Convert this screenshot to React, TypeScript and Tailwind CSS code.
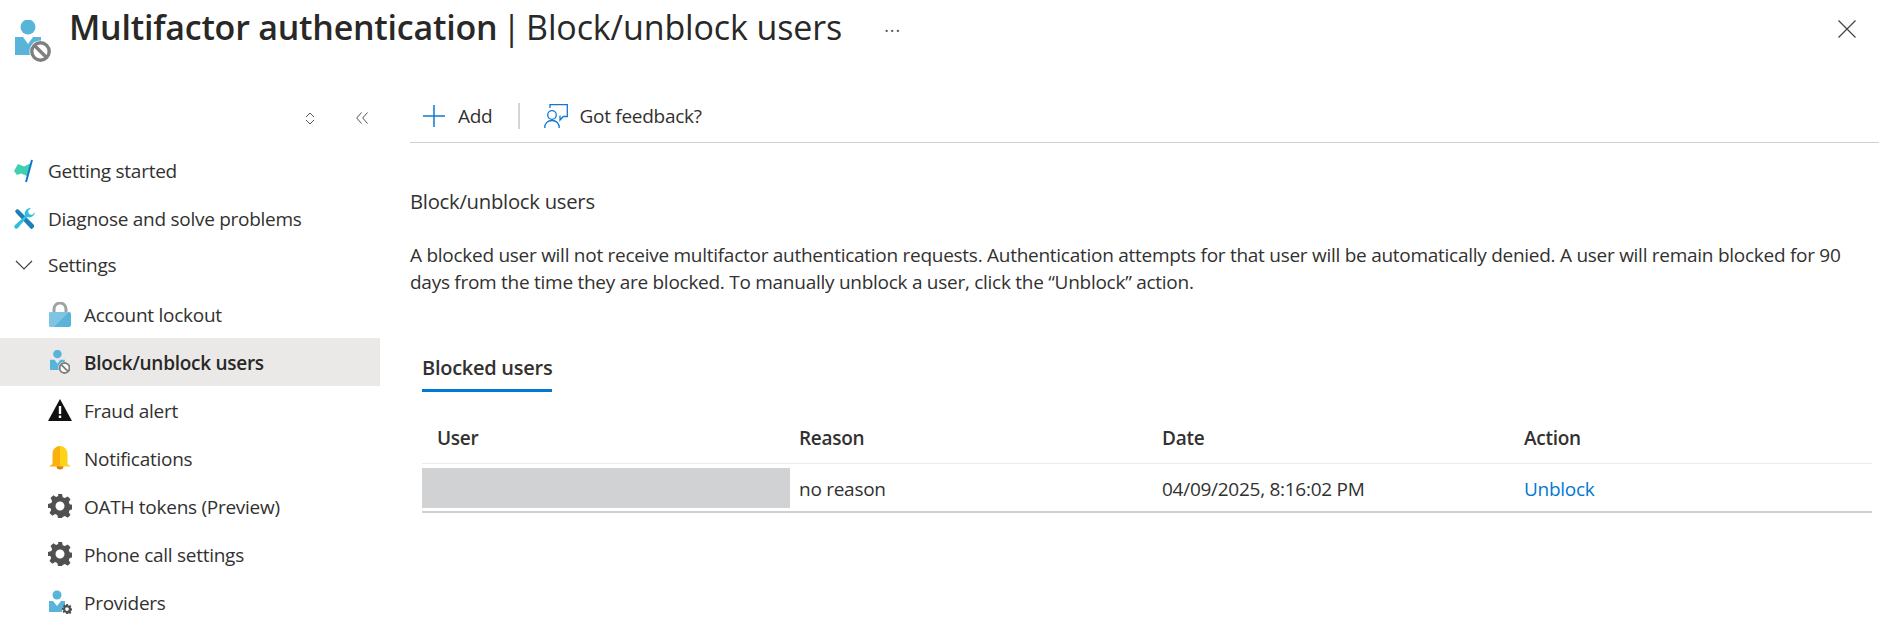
const fontStack = "font-['Open_Sans','Noto_Sans',sans-serif]";
const bodyText = "text-[19px] tracking-[-0.27px]";

function PersonBlockIcon({ height }: { height: number }) {
  return (
    <svg width={(height * 36) / 42} height={height} viewBox="0 0 36 42" className="shrink-0">
      <circle cx="13" cy="7" r="7.500" fill="#59b4d9" />
      <path d="M0 17h8l5 7 5-7h8v18H0z" fill="#59b4d9" />
      <circle cx="25.500" cy="31.500" r="11" fill="#fff" />
      <circle cx="25.500" cy="31.500" r="8.700" fill="#fff" stroke="#7f7f7f" strokeWidth="3.400" />
      <path d="M19.500 25.500l12 12" stroke="#7f7f7f" strokeWidth="3.400" />
    </svg>
  );
}

function GearIcon({ small }: { small?: boolean }) {
  const s = small ? 10 : 24;
  return (
    <svg width={s} height={s} viewBox="0 0 24 24" fill="#505050" className="shrink-0">
      <path
        fillRule="evenodd"
        d="M10 0h4l.7 3.200 2.200.9 2.800-1.700 2.800 2.800-1.700 2.800.9 2.200 3.300.8v4.200l-3.300.8-.9 2.200 1.700 2.800-2.800 2.800-2.800-1.700-2.200.9L14 24h-4l-.7-3.100-2.200-.9-2.800 1.700-2.800-2.800 1.700-2.800-.9-2.200L0 14.100V9.900l3.300-.8.900-2.200-1.700-2.800 2.800-2.800 2.800 1.700 2.200-.9zM12 7.500a4.500 4.500 0 1 0 0 9 4.500 4.500 0 0 0 0-9z"
      />
    </svg>
  );
}

function NavRow({
  icon,
  label,
  active,
  nested,
  h = "h-12",
}: {
  icon: React.ReactNode;
  label: string;
  active?: boolean;
  nested?: boolean;
  h?: string;
}) {
  return (
    <div
      className={`flex items-center ${h} ${nested ? "pl-[48px]" : "pl-[12px]"} ${
        active ? "bg-[#ebe9e7] font-semibold text-[#292827]" : "text-[#323130]"
      }`}
    >
      <span className="flex w-[24px] justify-center">{icon}</span>
      <span className={`ml-[12px] whitespace-nowrap ${nested ? "mt-[2px]" : ""} ${bodyText}`}>{label}</span>
    </div>
  );
}

function Sidebar() {
  return (
    <div className="w-[380px] shrink-0">
      <div className="mt-[18px] flex h-[28px] items-center justify-end gap-[41px] pr-[12px]">
        <svg width="10" height="13" viewBox="0 0 10 13" fill="none" stroke="#555" strokeWidth="1">
          <path d="M1 5l4-4 4 4M1 8l4 4 4-4" />
        </svg>
        <svg width="12" height="12" viewBox="0 0 12 12" fill="none" stroke="#555" strokeWidth="1">
          <path d="M5.500.5L.7 6l4.800 5.500M11.500.5L6.700 6l4.800 5.500" />
        </svg>
      </div>
      <div className="mt-[15px]">
        <NavRow
          label="Getting started"
          icon={
            <svg width="20" height="24" viewBox="0 0 20 24">
              <path d="M0 12l4-7 6 2.500L17 4l-4 13-6-2.500-4 1.500z" fill="#3fd0b0" />
              <path d="M18 1L12 23" stroke="#0f78d4" strokeWidth="2" />
            </svg>
          }
        />
        <NavRow
          label="Diagnose and solve problems"
          icon={
            <svg width="21" height="22" viewBox="0 0 21 22">
              <path d="M1 3l2-2 2 1 15 15v2l-2 2h-1L2 5z" fill="#1e7fb8" />
              <path d="M21 4a6 6 0 0 1-8 5L4 20l-2 1-2-2 1-2L11 8a6 6 0 0 1 6-8l-3 3 1 3 3 1z" fill="#32bedd" />
            </svg>
          }
        />
        <NavRow
          h="h-[44px]"
          label="Settings"
          icon={
            <svg width="18" height="10" viewBox="0 0 18 10" fill="none" stroke="#444" strokeWidth="1.200">
              <path d="M1 1l8 8 8-8" />
            </svg>
          }
        />
        <NavRow
          nested
          h="h-[51px] pt-[4px]"
          label="Account lockout"
          icon={
            <svg width="22" height="25" viewBox="0 0 22 25">
              <path d="M5 12V7a6 6 0 0 1 12 0v5" fill="none" stroke="#a0a1a2" strokeWidth="3" />
              <rect y="10" width="22" height="15" rx="2" fill="#59b4d9" />
              <path d="M0 24V12a2 2 0 0 1 2-2h18L5 25H2z" fill="#7fc4e2" />
            </svg>
          }
        />
        <NavRow nested active label="Block/unblock users" icon={<PersonBlockIcon height={24} />} />
        <NavRow
          nested
          label="Fraud alert"
          icon={
            <svg width="24" height="22" viewBox="0 0 24 22">
              <path d="M12 0l12 22H0z" fill="#111" />
              <rect x="10.800" y="7" width="2.400" height="8" fill="#fff" />
              <rect x="10.800" y="16.500" width="2.400" height="2.500" fill="#fff" />
            </svg>
          }
        />
        <NavRow
          nested
          label="Notifications"
          icon={
            <svg width="22" height="24" viewBox="0 0 22 24">
              <path d="M7.500 20h7a3.500 3.500 0 0 1-7 0z" fill="#e8790f" />
              <path d="M11 0a7.500 7.500 0 0 0-7.500 7.500V18L0 20.500h11z" fill="#fdb00d" />
              <path d="M11 0a7.500 7.500 0 0 1 7.500 7.500V18l3.500 2.500H11z" fill="#fdd31a" />
            </svg>
          }
        />
        <NavRow nested label="OATH tokens (Preview)" icon={<GearIcon />} />
        <NavRow nested label="Phone call settings" icon={<GearIcon />} />
        <NavRow
          nested
          label="Providers"
          icon={
            <span className="relative flex">
              <svg width="22" height="24" viewBox="0 0 22 24">
                <circle cx="8" cy="5" r="4.500" fill="#59b4d9" />
                <path d="M0 11h4l4 5 4-5h4v6a5 5 0 0 0-3 5H0z" fill="#59b4d9" />
              </svg>
              <span className="absolute bottom-0 right-[-1px]">
                <GearIcon small />
              </span>
            </span>
          }
        />
      </div>
    </div>
  );
}

function ToolbarIconPlus() {
  return (
    <svg width="24" height="24" viewBox="0 0 24 24" stroke="#0f78d4" strokeWidth="1.500">
      <path d="M12 1v22M1 12h22" />
    </svg>
  );
}

function FeedbackIcon() {
  return (
    <svg width="24" height="24" viewBox="0 0 24 24" fill="none" stroke="#0f78d4" strokeWidth="1.300">
      <path d="M6 4V.7h17.300v11.800h-4L16 16v-4.500" />
      <circle cx="8" cy="11" r="4.300" />
      <path d="M.7 24c0-4.500 3-7.500 7.300-7.500s7.300 3 7.300 7.500" />
    </svg>
  );
}

function MainPane() {
  return (
    <div className="ml-[30px] min-w-0 flex-1 text-[#323130]">
      <div className="flex h-[57px] items-center border-b border-[#d2d0ce] pl-[12px] pt-[4px]">
        <ToolbarIconPlus />
        <span className={`ml-[12px] ${bodyText}`}>Add</span>
        <span className="ml-[26px] mr-[24px] h-[26px] w-[2px] bg-[#d6d5d4]" />
        <FeedbackIcon />
        <span className={`ml-[11px] ${bodyText}`}>Got feedback?</span>
      </div>
      <h2 className="mt-[45px] text-[20.3px] leading-[27px] tracking-[-0.27px]">Block/unblock users</h2>
      <p className={`mt-[27px] pr-[20px] leading-[27px] ${bodyText}`}>
        A blocked user will not receive multifactor authentication requests. Authentication attempts for that user
        will be automatically denied. A user will remain blocked for 90 days from the time they are blocked. To
        manually unblock a user, click the “Unblock” action.
      </p>
      <div className="ml-[12px] mr-[7px]">
        <div className="mt-[58px] inline-block border-b-[3px] border-[#0078d4] pb-[8px] text-[20px] leading-[27px] font-semibold tracking-[-0.27px]">
          Blocked users
        </div>
        <div className={`mt-[33px] grid grid-cols-[362px_363px_362px_1fr] border-b border-[#edebe9] pb-[11px] pl-[15px] leading-[27px] font-semibold ${bodyText}`}>
          <span>User</span>
          <span>Reason</span>
          <span>Date</span>
          <span>Action</span>
        </div>
        <div className={`grid h-[49px] grid-cols-[377px_363px_362px_1fr] items-center border-b-2 border-[#d2d0ce] pt-[3px] ${bodyText}`}>
          <span className="mt-[1px] h-[40px] w-[368px] self-start bg-[#d1d2d4]" />
          <span>no reason</span>
          <span>04/09/2025, 8:16:02 PM</span>
          <span className="text-[#0078d4]">Unblock</span>
        </div>
      </div>
    </div>
  );
}

export default function App() {
  return (
    <div className={`h-[634px] w-[1879px] overflow-hidden bg-white ${fontStack}`}>
      <div className="flex h-[86px] items-start">
        <div className="ml-[15px] mt-[20px]">
          <PersonBlockIcon height={42} />
        </div>
        <h1 className="ml-[18px] text-[34px] leading-[54px] whitespace-nowrap text-[#292827]">
          <span className="font-semibold tracking-[-0.23px]">Multifactor authentication</span>
          <span className="mx-[5px]">|</span>
          <span className="tracking-[-0.12px]">Block/unblock users</span>
        </h1>
        <span className="ml-[42px] mt-[20px] text-[18px] leading-[20px] tracking-[1px] text-[#555]">···</span>
        <svg width="18" height="18" viewBox="0 0 18 18" stroke="#444" strokeWidth="1.200" className="ml-auto mr-[23px] mt-[20px]">
          <path d="M.5.5l17 17M17.500.5l-17 17" />
        </svg>
      </div>
      <div className="flex">
        <Sidebar />
        <MainPane />
      </div>
    </div>
  );
}
